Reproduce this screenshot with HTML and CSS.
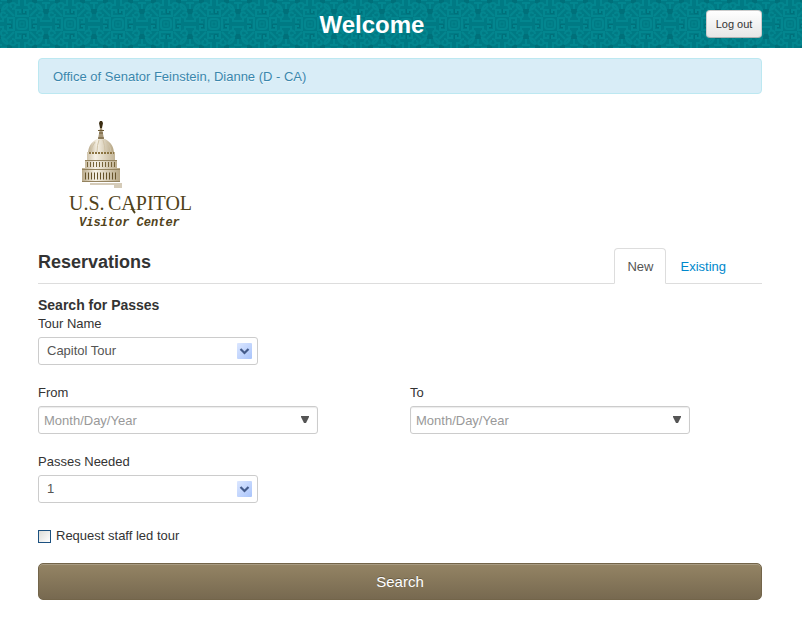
FILE: index.html
```html
<!DOCTYPE html>
<html lang="en">
<head>
<meta charset="utf-8">
<title>Welcome</title>
<link rel="stylesheet" href="styles.css">
</head>
<body>
<header class="topbar">
  <svg class="topbar-pattern" width="100%" height="100%" aria-hidden="true">
    <defs>
      <g id="quarter" fill="none" stroke="#03868f" stroke-width="2">
        <rect x="-5" y="-5" width="10" height="10" rx="3"/>
        <rect x="-2" y="-2" width="4" height="4" stroke-width="1"/>
        <path d="M8 0v6h6v-4h-3M0 8h6v6h-4v-3M8 8l7 7M10 15c-4 0-5 6-1 6s3-4 1-4M15 10c0-4 6-5 6-1s-4 3-4 1M14 20q5-1 6-6q-5 1-6 6M24 3h-5v3M3 24v-5h3M24 15v6h-4M15 24h6"/>
      </g>
      <pattern id="damask" x="22" y="24" width="48" height="48" patternUnits="userSpaceOnUse">
        <rect width="48" height="48" fill="#007a84"/>
        <path d="M10 0h5v4h-5zM33 0h5v4h-5zM0 10h4v5H0zM0 33h4v5H0zM21 10h6v5h-6zM21 33h6v5h-6zM10 21h5v6h-5zM33 21h5v6h-5z" fill="#00707a"/>
        <use href="#quarter"/>
        <use href="#quarter" transform="translate(48 0) scale(-1 1)"/>
        <use href="#quarter" transform="translate(0 48) scale(1 -1)"/>
        <use href="#quarter" transform="translate(48 48) scale(-1 -1)"/>
      </pattern>
    </defs>
    <rect width="100%" height="100%" fill="url(#damask)"/>
  </svg>
  <h1 class="topbar-title">Welcome</h1>
  <button class="logout" type="button">Log out</button>
</header>
<main class="page">
  <p class="notice">Office of Senator Feinstein, Dianne (D - CA)</p>
  <svg class="logo" width="160" height="130" viewBox="0 0 160 130" role="img" aria-label="U.S. Capitol Visitor Center">
    <defs>
      <linearGradient id="stone"><stop offset="0" stop-color="#b9a98a"/><stop offset=".35" stop-color="#f6f1e5"/><stop offset="1" stop-color="#b5a583"/></linearGradient>
    </defs>
    <path d="M50 11h2l1 2-1 5h-2l-1-5z" fill="#3b2d12"/>
    <path d="M50 18h2l2 11h-6z" fill="#a8987a"/>
    <path d="M48 20.500h6M49 23h4M48 28h6" stroke="#6a5833"/>
    <path d="M47 29h8c6 3 9 8 9 15H38c0-7 3-12 9-15z" fill="url(#stone)"/>
    <path d="M45 32q-4 5-4 10M49 30q-2 5-2 12M53 30q2 5 2 12M57 32q4 5 4 10" fill="none" stroke="#cfc2a6"/>
    <path d="M37 42h28v9H37zM35 50h32v9H35zM32 58h38v14H32z" fill="url(#stone)"/>
    <path d="M39 43h25" stroke="#8b7442" stroke-width="2" stroke-dasharray="2 1"/>
    <path d="M35 50.500h32M32 59.500h38M32 71.500h38" stroke="#94835f"/>
    <path d="M37 54.500h29" stroke="#766338" stroke-width="5" stroke-dasharray="1 2"/>
    <path d="M35 66h33" stroke="#655229" stroke-width="7" stroke-dasharray="1 2"/>
    <path d="M40 73h32v5h-8v-3H40z" fill="#d5cbb8"/>
    <text class="logo-name" x="19" y="100">U.S.</text>
    <text class="logo-name" x="58" y="100">CAPITOL</text>
    <path d="M82 97q1 4 3 6" fill="none" stroke="#51431b" stroke-width="2"/>
    <text class="logo-sub" x="29" y="116">Visitor Center</text>
  </svg>
  <div class="section-head">
    <h2 class="section-title">Reservations</h2>
    <nav class="tabs" aria-label="Reservations">
      <a class="tab tab-active" href="#new" aria-current="page">New</a>
      <a class="tab" href="#existing">Existing</a>
    </nav>
  </div>
  <form class="search" id="new">
    <h3 class="form-title">Search for Passes</h3>
    <div class="field">
      <label for="tour">Tour Name</label>
      <div class="select-wrap">
        <select class="control" id="tour"><option>Capitol Tour</option></select>
        <svg class="select-arrow" width="15" height="16" viewBox="0 0 15 16" aria-hidden="true"><use href="#drop"/></svg>
      </div>
    </div>
    <div class="dates">
      <div class="field">
        <label for="from">From</label>
        <div class="date-wrap">
          <input class="control" id="from" type="text" placeholder="Month/Day/Year">
          <svg class="date-arrow" width="8" height="7" viewBox="0 0 8 7" aria-hidden="true"><path d="M0 0h8v1L5 7H3L0 1z"/></svg>
        </div>
      </div>
      <div class="field">
        <label for="to">To</label>
        <div class="date-wrap">
          <input class="control" id="to" type="text" placeholder="Month/Day/Year">
          <svg class="date-arrow" width="8" height="7" viewBox="0 0 8 7" aria-hidden="true"><path d="M0 0h8v1L5 7H3L0 1z"/></svg>
        </div>
      </div>
    </div>
    <div class="field">
      <label for="passes">Passes Needed</label>
      <div class="select-wrap">
        <select class="control" id="passes"><option>1</option></select>
        <svg class="select-arrow" width="15" height="16" viewBox="0 0 15 16" aria-hidden="true">
          <defs><linearGradient id="blue" x2="1" y2="1"><stop offset="0" stop-color="#dce7ff"/><stop offset="1" stop-color="#a9c4fb"/></linearGradient></defs>
          <g id="drop"><rect width="15" height="16" rx="1" fill="url(#blue)"/><path d="M3.500 6l4 4 4-4" fill="none" stroke="#445b8a" stroke-width="2.200"/></g>
        </svg>
      </div>
    </div>
    <label class="check"><input type="checkbox"> Request staff led tour</label>
    <button class="submit" type="submit">Search</button>
  </form>
</main>
</body>
</html>
```
FILE: styles.css
```css
* { box-sizing: border-box; }
body {
  margin: 0;
  background: #fff;
  color: #333;
  font: 13px/18px "Liberation Sans", Arial, sans-serif;
}
h1, h2, h3, p { margin: 0; }
button, input, select { font: inherit; }

.topbar {
  position: relative;
  display: flex;
  align-items: center;
  height: 48px;
  padding: 0 40px 0 38px;
  background: #00808a;
}
.topbar-pattern { position: absolute; inset: 0; }
.topbar-title {
  position: relative;
  flex: 1;
  padding-top: 2px;
  color: #fff;
  font-size: 24px;
  line-height: 36px;
  text-align: center;
}
.logout {
  position: relative;
  min-width: 56px;
  height: 28px;
  padding: 0 8px;
  border: 1px solid #ccc;
  border-bottom-color: #b3b3b3;
  border-radius: 4px;
  background: linear-gradient(#fff, #e6e6e6);
  color: #333;
  font-size: 11px;
}

.page { padding: 10px 40px 40px 38px; }
.notice {
  padding: 9px 14px 7px;
  border: 1px solid #bce8f1;
  border-radius: 4px;
  background: #d9edf7;
  color: #3a87ad;
  text-shadow: 0 1px 0 rgba(255, 255, 255, .5);
}
.logo { display: block; margin: 16px 12px 8px; }
.logo text { fill: #51431b; }
.logo-name { font: 20px "Liberation Serif", serif; }
.logo-sub { font: italic bold 12px "Liberation Mono", monospace; }

.section-head {
  display: flex;
  justify-content: space-between;
  border-bottom: 1px solid #ddd;
}
.section-title { font-size: 18px; line-height: 28px; }
.tabs { display: flex; gap: 1px; margin: 0 23px -1px 0; }
.tab {
  padding: 9px 12px 7px;
  border: 1px solid transparent;
  border-radius: 4px 4px 0 0;
  color: #08c;
  text-decoration: none;
}
.tab-active {
  border-color: #ddd;
  border-bottom-color: #fff;
  background: #fff;
  color: #555;
}

.search { padding-top: 11px; }
.form-title { font-size: 14px; line-height: 20px; }
.field label { display: block; margin-bottom: 4px; }
.field { margin-bottom: 19px; }
.select-wrap, .date-wrap { position: relative; }
.select-wrap { width: 220px; }
.date-wrap { width: 280px; max-width: 100%; }
.dates { display: grid; grid-template-columns: repeat(2, 1fr); gap: 20px; }
.control {
  display: block;
  appearance: none;
  width: 100%;
  height: 28px;
  padding: 0 24px 0 5px;
  border: 1px solid #ccc;
  border-radius: 3px;
  background: #fff;
  color: #555;
}
select.control { padding-left: 8px; }
input.control { box-shadow: inset 0 1px 1px rgba(0, 0, 0, .08); }
.control::placeholder { color: #999; opacity: 1; }
.select-arrow, .date-arrow { position: absolute; pointer-events: none; }
.select-arrow { top: 6px; right: 6px; }
.date-arrow { top: 10px; right: 9px; fill: #555; }
.check { display: flex; align-items: center; gap: 5px; margin: 24px 0 18px; }
.check input {
  appearance: none;
  width: 13px;
  height: 13px;
  margin: 0;
  border: 1px solid #1c5180;
  background: linear-gradient(135deg, #dcdcd7, #fff);
}
.submit {
  display: block;
  width: 100%;
  height: 37px;
  border: 1px solid #73654a;
  border-radius: 5px;
  background: linear-gradient(#948464, #776950);
  box-shadow: inset 0 1px 0 rgba(255, 255, 255, .2);
  color: #fff;
  font-size: 15px;
  text-shadow: 0 -1px 0 rgba(0, 0, 0, .25);
}
```
